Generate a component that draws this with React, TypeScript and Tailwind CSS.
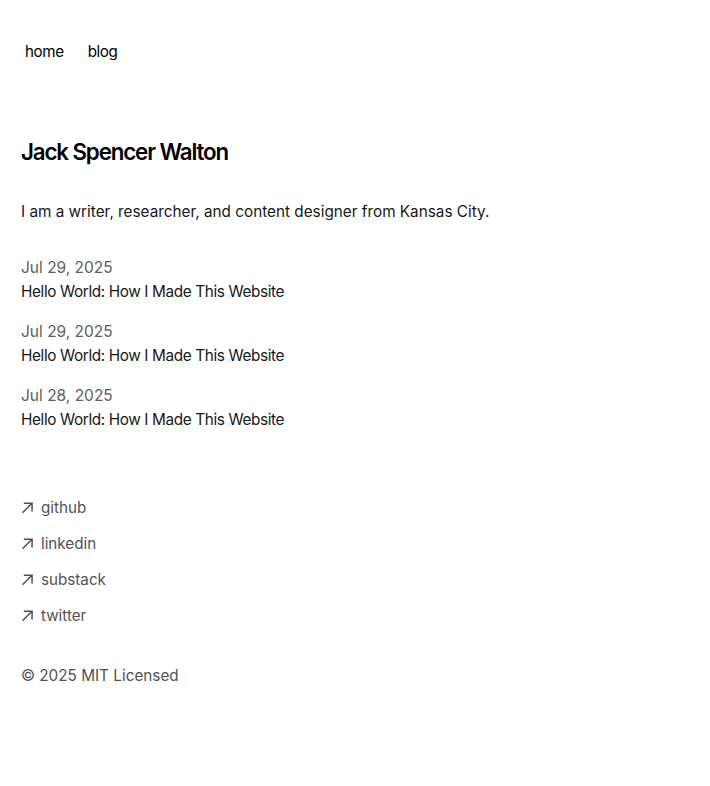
const posts = [
  { date: "Jul 29, 2025", title: "Hello World: How I Made This Website" },
  { date: "Jul 29, 2025", title: "Hello World: How I Made This Website" },
  { date: "Jul 28, 2025", title: "Hello World: How I Made This Website" },
];

const links = ["github", "linkedin", "substack", "twitter"];

const ArrowIcon = () => (
  <svg width="12" height="12" viewBox="0 0 12 12" fill="none">
    <path
      d="M2.07102 11.3494L0.963068 10.2415L9.2017 1.98864H2.83807L2.85227 0.454545H11.8438V9.46023H10.2955L10.3097 3.09659L2.07102 11.3494Z"
      fill="currentColor"
    />
  </svg>
);

export default function App() {
  return (
    <div
      className="min-h-screen bg-white text-[#171717] antialiased"
      style={{ fontFamily: "Inter, 'Noto Sans', sans-serif" }}
    >
      <main className="mx-[21px] mt-8 max-w-xl">
        <nav className="mb-16 -ml-[8px] flex tracking-tight">
          <a className="m-1 px-2 py-1 text-[15.2px] leading-6 text-black">home</a>
          <a className="m-1 px-2 py-1 text-[15.2px] leading-6 text-black">blog</a>
        </nav>

        <h1 className="mb-8 text-[22.3px] leading-8 font-semibold tracking-tighter text-black">
          Jack Spencer Walton
        </h1>
        <p className="mb-8 text-[15.3px] leading-6">
          I am a writer, researcher, and content designer from Kansas City.
        </p>

        <div className="flex flex-col">
          {posts.map((post, i) => (
            <a key={i} className="mb-4 flex flex-col">
              <p className="text-[15.5px] leading-6 text-[#5e5e5e]">
                {post.date}
              </p>
              <p className="text-[15.35px] leading-6 tracking-tight text-[#171717]">
                {post.title}
              </p>
            </a>
          ))}
        </div>

        <ul className="mt-12 flex flex-col gap-3 text-[15.2px] text-[#525252]">
          {links.map((l) => (
            <li key={l}>
              <a className="flex items-center leading-6">
                <ArrowIcon />
                <p className="ml-2 h-6">{l}</p>
              </a>
            </li>
          ))}
        </ul>
        <p className="mt-9 text-[15.3px] leading-6 text-[#525252]">© 2025 MIT Licensed</p>
      </main>
    </div>
  );
}
